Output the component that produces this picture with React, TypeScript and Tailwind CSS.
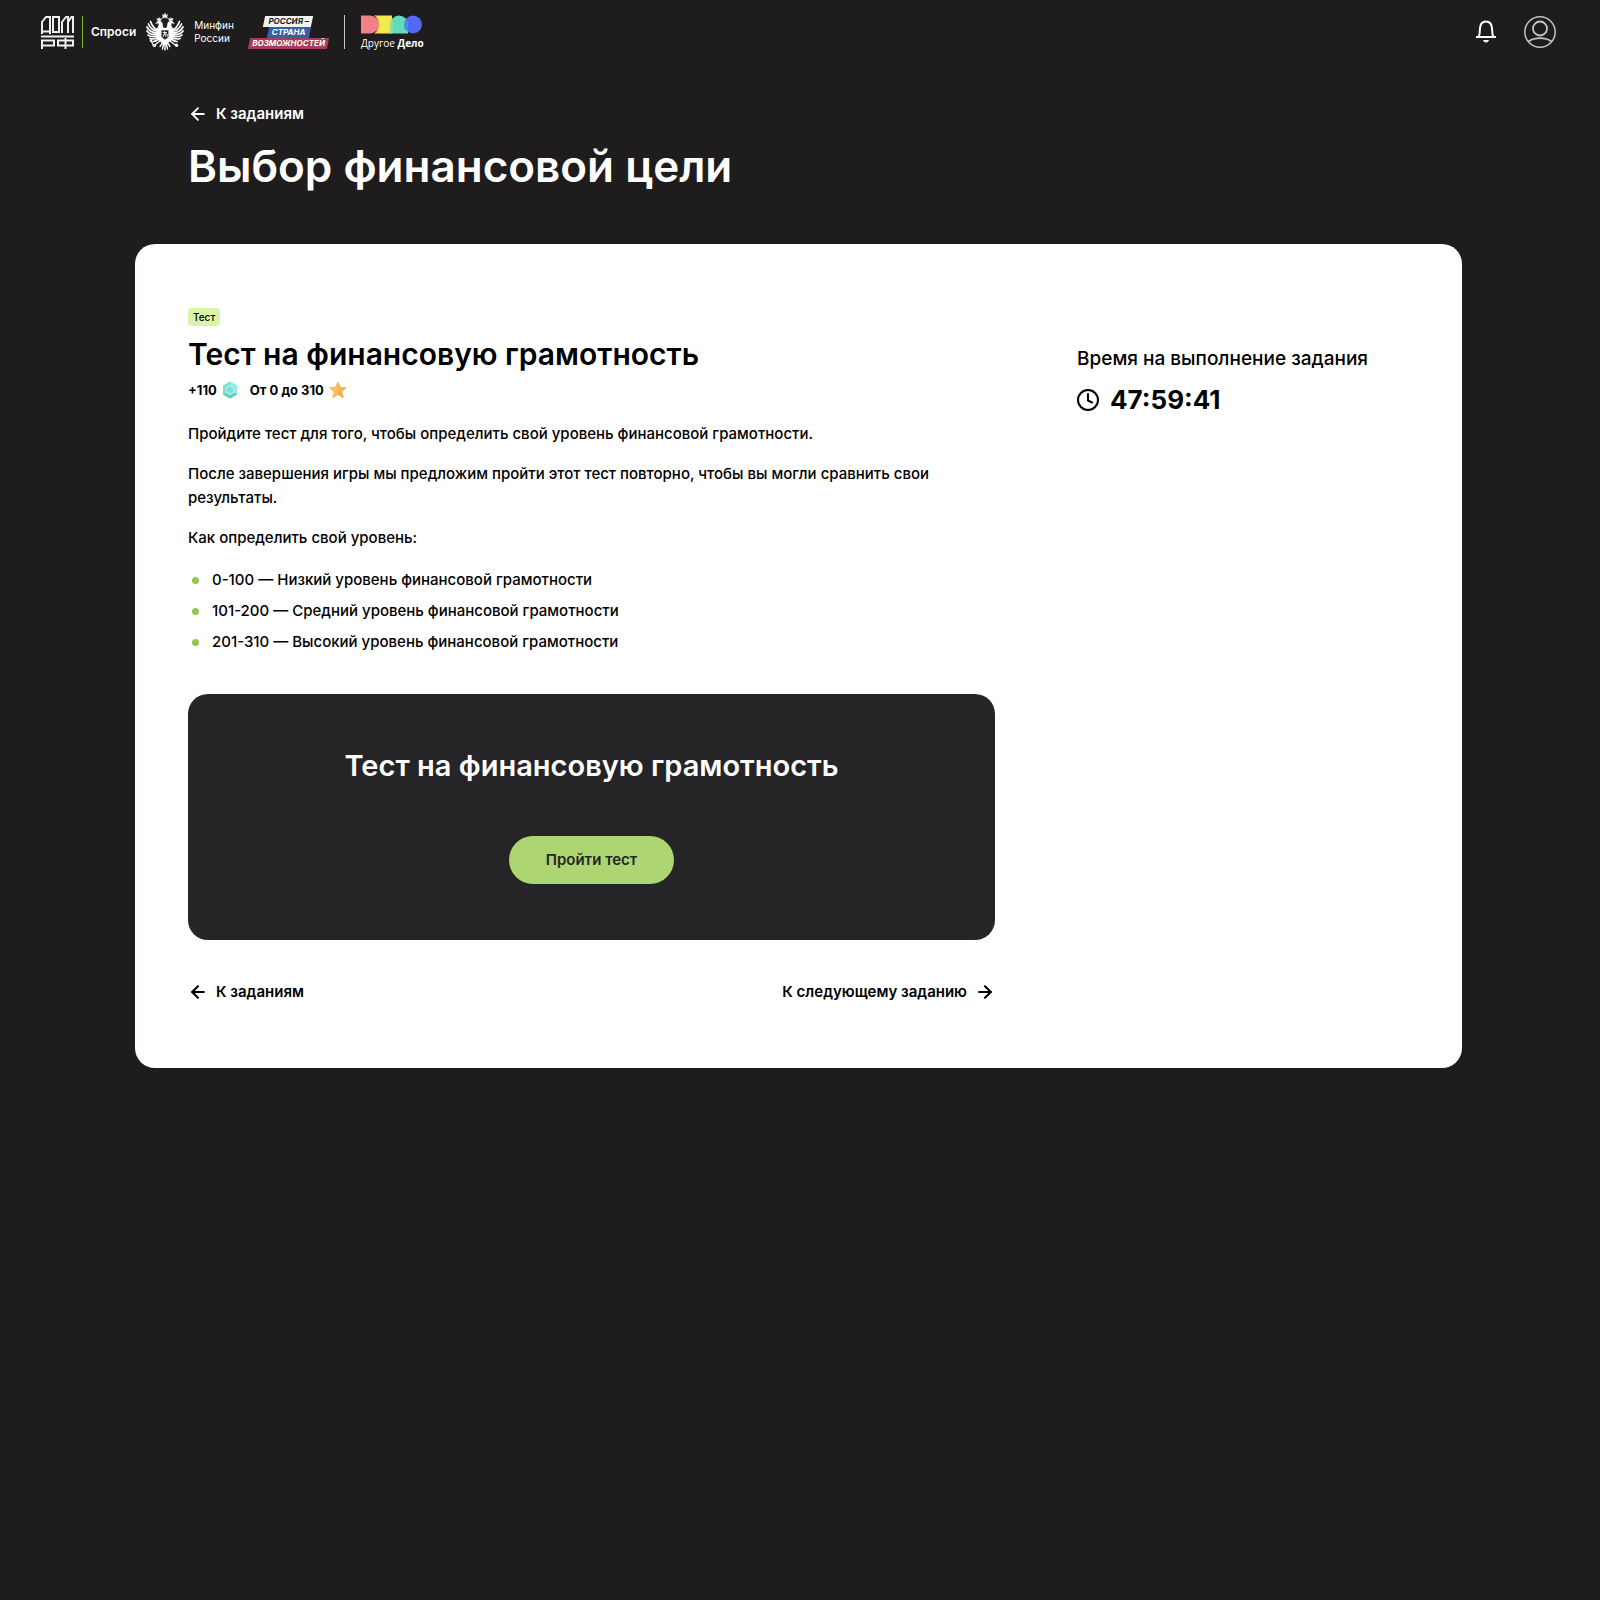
import type { ReactNode } from 'react'
import { ArrowLeft, ArrowRight } from 'lucide-react'

const levels = [
  '0-100 — Низкий уровень финансовой грамотности',
  '101-200 — Средний уровень финансовой грамотности',
  '201-310 — Высокий уровень финансовой грамотности',
]

function DomRfLogo() {
  return (
    <svg width="33" height="33" viewBox="0 0 33 33" fill="none" stroke="#f1f0ee" strokeWidth="2" aria-label="ДОМ.РФ">
      <path d="M1 18V6L5 1h4v17M1 15.500h8" />
      <rect x="12" y="1" width="6" height="15" />
      <path d="M21 17V6l4-5h2v16M27 6l3.500-5H32v16" />
      <path d="M0 20.500h33" />
      <path d="M1 33v-8.500h12v5H1" />
      <rect x="17" y="24.500" width="15" height="5" />
      <path d="M24.500 22v11" />
    </svg>
  )
}

function EagleEmblem() {
  return (
    <svg width="38" height="40" viewBox="0 0 38 40" fill="none" stroke="#fff" strokeLinecap="round" aria-label="Герб">
      {/* crowns */}
      <path d="M17.200 5.500l-.7-3 1.500 1 1-2.500 1 2.500 1.500-1-.7 3z" fill="#fff" strokeWidth=".5" />
      <path d="M11.500 8.500l-.6-2.300 1.400.8 1-1.500.7 1.700 1.300-.5-.7 2.200zM26.500 8.500l.6-2.300-1.400.8-1-1.500-.7 1.700-1.300-.5.7 2.200z" fill="#fff" strokeWidth=".4" />
      <path d="M15.500 6.500l2-1M22.500 6.500l-2-1" strokeWidth=".7" />
      {/* heads and necks */}
      <path d="M9.500 11.500l2-2c2-1.200 4.500 0 5 2.200.3 1.500 0 2.800 1 4.300h3c1-1.500.7-2.800 1-4.300.5-2.200 3-3.400 5-2.200l2 2-3-.3c-.7 1.800.2 3.800 1.500 5.300l-1 11-4.500 4h-5l-4.500-4-1-11c1.300-1.500 2.200-3.500 1.500-5.300z" fill="#fff" strokeWidth=".3" />
      {/* wings */}
      <path d="M12 18C8 17 6 13.500 4.500 9.500M12 19.500C7 18.500 4 16 2.500 12M12 21C7 21 3 19 1 15M12 22.500C7 23 3 22 1 19M12 24C8 25 4 25 2 23M12.500 25.500C9 27 6 27.500 4 26.500M13 27C11 28.500 9 29.500 7 29.500" strokeWidth="1.700" />
      <path d="M26 18c4-1 6-4.500 7.500-8.500M26 19.500c5-1 8-3.500 9.500-7.500M26 21c5 0 9-2 11-6M26 22.500c5 .5 9-.5 11-3.500M26 24c4 1 8 1 10-1M25.500 25.500c3.500 1.500 6.500 2 8.500 1M25 27c2 1.500 4 2.500 6 2.500" strokeWidth="1.700" />
      {/* shield with the rider */}
      <path d="M15.800 18.500h6.400v6.500L19 27.500 15.800 25z" fill="#1e1c1d" stroke="#1e1c1d" strokeWidth=".4" />
      <path d="M17 20.500h3.500M18.500 19.500l.8 5M17 24.500l1-2.500h3l.3 2.500" strokeWidth=".9" />
      {/* legs, sceptre and orb */}
      <path d="M14 29l-4 3M24 29l4 3M8 34.500l-3-6M10 32l-3 1.500M10 32l-1 2.500M28 32l3 1.500" strokeWidth="1.300" />
      <circle cx="30.500" cy="33.200" r="1.700" fill="#fff" stroke="none" />
      <circle cx="5" cy="28.800" r="1.300" fill="#fff" stroke="none" />
      {/* tail */}
      <path d="M19 29v9M18 30l-1.500 7M20 30l1.500 7M17 30l-3 4.500M21 30l3 4.500" strokeWidth="1.400" />
    </svg>
  )
}

function RsvLogo() {
  return (
    <div className="flex flex-col items-center text-[8px] leading-[11px] font-bold italic">
      <span className="relative isolate px-1 text-[#1e1c1d]">
        <span className="absolute inset-0 -z-10 -skew-x-12 bg-[#f3f1f0]" />
        РОССИЯ –
      </span>
      <span className="relative isolate px-1 text-white">
        <span className="absolute inset-0 -z-10 -skew-x-12 bg-[#3461a4]" />
        СТРАНА
      </span>
      <span className="relative isolate px-[3px] text-white">
        <span className="absolute inset-0 -z-10 -skew-x-12 bg-[#a93c58]" />
        ВОЗМОЖНОСТЕЙ
      </span>
    </div>
  )
}

function DrugoeDeloLogo() {
  return (
    <div className="flex flex-col gap-px pt-px">
      <svg width="61" height="19" viewBox="0 0 61 19" aria-hidden="true">
        <path d="M0 .5h9a9 9 0 0 1 0 18H0z" fill="#f08287" />
        <path d="M14 .5h17v18H14c5-4 5-14 0-18z" fill="#f3e84c" />
        <path d="M14 .5c5 4 5 14 0 18 5-4 5-14 0-18z" fill="#e9a45c" stroke="#e8a25c" strokeWidth="1" />
        <path d="M29 18.500V9.500a9 9 0 0 1 18 0v9z" fill="#63dcb9" />
        <path d="M29.500 18V9.500a9 9 0 0 1 2-5.500v14z" fill="#b3dc6a" />
        <circle cx="52" cy="9.500" r="9" fill="#5468f6" />
        <path d="M45 4a9 9 0 0 0 0 11.500h2V9.500a9 9 0 0 0-2-5.500z" fill="#3b9bd0" />
      </svg>
      <span className="font-['Open_Sans'] text-[10px] leading-4 whitespace-nowrap text-white">
        Другое <b>Дело</b>
      </span>
    </div>
  )
}

function CrystalIcon() {
  return (
    <svg width="16" height="18" viewBox="0 0 16 18" aria-hidden="true">
      <path d="M8 .5l7 4v9l-7 4-7-4v-9z" fill="#74e3d3" />
      <path d="M8 .5l7 4v9l-3-2V6.500L8 4z" fill="#8cf0e1" />
      <path d="M1 13.500l3-2L8 14l4-2.500 3 2-7 4z" fill="#5ecdbd" />
      <path d="M8 3.700l4.500 2.600v5.400L8 14.300l-4.500-2.600V6.300z" fill="#c6e2df" />
      <circle cx="8" cy="9" r="3" fill="#62ead9" />
    </svg>
  )
}

function StarIcon() {
  return (
    <svg width="18" height="18" viewBox="0 0 18 18" aria-hidden="true">
      <path d="M9 1l2.200 5.300 6 .5-4.600 3.900 1.600 6L9 13.500l-5.200 3.200 1.600-6L.8 6.800l6-.5z" fill="#f6b552" stroke="#f6b552" strokeLinejoin="round" />
      <path d="M9 1v12.500l-5.200 3.200 1.600-6L.8 6.800l6-.5z" fill="#f8bd60" />
      <path d="M9 9.500l3.600 1.200 1.600 6L9 13.500z" fill="#f2ae4e" />
    </svg>
  )
}

function NavLink({ children }: { children: ReactNode }) {
  return (
    <a href="#" className="inline-flex items-center gap-2 text-[15px] leading-6 font-semibold">
      {children}
    </a>
  )
}

function Header() {
  return (
    <header className="flex h-16 items-center justify-between pr-11 pl-[41px]">
      <div className="flex items-center">
        <DomRfLogo />
        <div className="ml-2 h-8 w-px bg-[#7cb32c]" />
        <span className="ml-2 text-xs font-semibold">Спроси</span>
        <div className="ml-[10px]">
          <EagleEmblem />
        </div>
        <span className="ml-[10px] w-[42px] text-[10px] leading-[13px]">
          Минфин
          <br />
          России
        </span>
        <div className="ml-[13px]">
          <RsvLogo />
        </div>
        <div className="ml-4 h-[34px] w-px bg-[#c9c8c8]" />
        <div className="ml-4">
          <DrugoeDeloLogo />
        </div>
      </div>
      <div className="flex items-center gap-7">
        <button type="button" aria-label="Уведомления">
          <svg width="20" height="24" viewBox="0 0 20 24" fill="none" stroke="#fff" strokeWidth="2">
            <path d="M0 17h20M2.500 17c1.500-2 1.200-4.500 1.400-8C4.100 4 6 1.500 10 1.500S15.900 4 16.100 9c.2 3.500-.1 6 1.400 8" />
            <path d="M7.500 20.500c.5 2 4.500 2 5 0z" fill="#fff" strokeWidth="1" />
          </svg>
        </button>
        <button type="button" aria-label="Профиль">
          <svg width="32" height="32" viewBox="0 0 32 32" fill="none" stroke="#c4c4c4" strokeWidth="1.500">
            <circle cx="16" cy="16" r="15.200" />
            <circle cx="16" cy="12.500" r="7" strokeWidth="1.800" />
            <path d="M4.500 25.500c6-4.500 17-4.500 23 0" strokeWidth="1.800" />
          </svg>
        </button>
      </div>
    </header>
  )
}

export default function App() {
  return (
    <div className="min-h-screen bg-[#1e1c1d] font-['Inter',sans-serif] text-white">
      <Header />
      <main className="mr-[138px] ml-[135px]">
        <div className="px-[53px] pt-[38px]">
          <NavLink>
            <ArrowLeft size={20} strokeWidth={2.25} />
            К заданиям
          </NavLink>
          <h1 className="mt-2 text-[44px] leading-[56px] font-semibold">Выбор финансовой цели</h1>
        </div>

        <div className="mt-[50px] grid grid-cols-[minmax(0,1fr)_332px] gap-[82px] rounded-[20px] bg-white px-[53px] py-16 text-black">
          <section>
            <span className="block w-fit rounded bg-[#d8f5a6] px-[5px] text-[10px] leading-[18px] font-medium">Тест</span>
            <h2 className="mt-2 text-[30px] leading-10 font-semibold">Тест на финансовую грамотность</h2>
            <div className="mt-[6px] flex items-center gap-3 text-[13px] leading-5 font-bold">
              <span className="flex items-center gap-[5px]">
                +110 <CrystalIcon />
              </span>
              <span className="flex items-center gap-[5px]">
                От 0 до 310 <StarIcon />
              </span>
            </div>
            <div className="mt-[22px] flex flex-col gap-4 text-[15px] leading-6 font-medium">
              <p>Пройдите тест для того, чтобы определить свой уровень финансовой грамотности.</p>
              <p>
                После завершения игры мы предложим пройти этот тест повторно, чтобы вы могли сравнить свои
                результаты.
              </p>
              <p>Как определить свой уровень:</p>
              <ul className="space-y-[7px] pt-[2px]">
                {levels.map((level) => (
                  <li key={level} className="flex items-center gap-[13px] pl-1">
                    <span className="size-[7px] rounded-full bg-[#97c554]" />
                    {level}
                  </li>
                ))}
              </ul>
            </div>

            <div className="mt-10 flex flex-col items-center rounded-[20px] bg-[#252527] pt-[52px] pb-14 text-white">
              <h3 className="text-[29px] leading-10 font-semibold">Тест на финансовую грамотность</h3>
              <button
                type="button"
                className="mt-[50px] h-12 rounded-full bg-[#add571] px-[37px] text-[15px] leading-6 font-semibold text-[#252527]"
              >
                Пройти тест
              </button>
            </div>

            <nav className="mt-10 flex items-center justify-between">
              <NavLink>
                <ArrowLeft size={20} strokeWidth={2.5} />
                К заданиям
              </NavLink>
              <NavLink>
                К следующему заданию
                <ArrowRight size={20} strokeWidth={2.5} />
              </NavLink>
            </nav>
          </section>

          <aside className="pt-9">
            <p className="text-[19px] leading-[30px] font-medium">Время на выполнение задания</p>
            <div className="mt-[6px] flex items-center gap-[11px]">
              <svg width="22" height="22" viewBox="0 0 22 22" fill="none" stroke="#000" strokeWidth="2" strokeLinecap="round" strokeLinejoin="round">
                <circle cx="11" cy="11" r="10" />
                <path d="M11 5v6.500l4 2" />
              </svg>
              <span className="text-[26px] leading-10 font-bold">47:59:41</span>
            </div>
          </aside>
        </div>
      </main>
    </div>
  )
}
